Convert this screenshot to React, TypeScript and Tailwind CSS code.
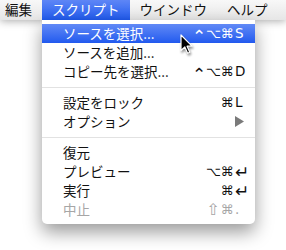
import React from "react";

type Item =
  | { sep: true }
  | {
      sep?: false;
      label: string;
      mods?: string[];
      keyChar?: string;
      submenu?: boolean;
      active?: boolean;
      disabled?: boolean;
    };

const items: Item[] = [
  { label: "ソースを選択...", mods: ["⌃", "⌥", "⌘"], keyChar: "S", active: true },
  { label: "ソースを追加..." },
  { label: "コピー先を選択...", mods: ["⌃", "⌥", "⌘"], keyChar: "D" },
  { sep: true },
  { label: "設定をロック", mods: ["⌘"], keyChar: "L" },
  { label: "オプション", submenu: true },
  { sep: true },
  { label: "復元" },
  { label: "プレビュー", mods: ["⌥", "⌘"], keyChar: "↵" },
  { label: "実行", mods: ["⌘"], keyChar: "↵" },
  { label: "中止", mods: ["⇧", "⌘"], keyChar: ".", disabled: true },
];

const jp = "font-['Noto_Sans_CJK_JP','Noto_Sans',sans-serif]";
const sym = "font-['DejaVu_Sans','Noto_Sans_CJK_JP',sans-serif]";

// per-glyph tweaks so the DejaVu symbols read like the Mac ones
const glyphClass: Record<string, string> = {
  "⌃": "text-[17px] translate-y-[3px]",
  "⌥": "text-[13px]",
  "⌘": "text-[13px]",
  "⇧": "text-[16px]",
  "↵": "text-[17px] translate-y-[1px]",
};

function MenuRow({ item }: { item: Exclude<Item, { sep: true }> }) {
  const color = item.active
    ? "text-white bg-gradient-to-b from-[#6189f6] to-[#2159ee]"
    : item.disabled
      ? "text-[#a6a6a6]"
      : "text-[#111]";
  return (
    <div className={`h-[19px] flex items-center pl-[21px] pr-[6px] ${color}`}>
      <span className={`${jp} text-[13.5px] leading-none flex-1`}>{item.label}</span>
      {item.submenu ? (
        <svg width="10" height="11" viewBox="0 0 10 11" className="mr-[4px]">
          <polygon points="0,0 9,5.5 0,11" fill="#7a7a7a" />
        </svg>
      ) : item.keyChar ? (
        <div className={`flex items-center ${sym} text-[13.5px] leading-none`}>
          {item.mods?.map((m, i) => (
            <span key={i} className={`w-[14px] text-center inline-block ${glyphClass[m] ?? ""}`}>
              {m}
            </span>
          ))}
          <span className={`w-[15px] text-left pl-[1px] inline-block ${glyphClass[item.keyChar] ?? ""}`}>
            {item.keyChar}
          </span>
        </div>
      ) : null}
    </div>
  );
}

export default function App() {
  return (
    <div className="relative w-[286px] h-[250px] bg-white overflow-hidden">
      <div
        className={`relative z-10 h-[20px] flex items-stretch bg-gradient-to-b from-[#f8f8f8] to-[#e6e6e6] shadow-[0_1px_9px_rgba(0,0,0,0.35)] ${jp} text-[13.5px] leading-none text-[#111]`}
      >
        <div className="flex items-center px-[10px] ml-[-5px]">編集</div>
        <div className="flex items-center px-[10px] text-white bg-gradient-to-b from-[#5e86f6] to-[#1f5aee]">
          スクリプト
        </div>
        <div className="flex items-center px-[10px]">ウインドウ</div>
        <div className="flex items-center px-[10px]">ヘルプ</div>
      </div>

      <div className="absolute z-20 left-[42px] top-[20px] w-[213px] bg-white rounded-b-[5px] pt-[4px] pb-[5px] shadow-[0_8px_18px_rgba(0,0,0,0.4)]">
        {items.map((item, i) =>
          item.sep ? (
            <div key={i} className="h-[12px] flex items-center">
              <div className="h-px w-full bg-[#e2e2e2]" />
            </div>
          ) : (
            <MenuRow key={i} item={item} />
          )
        )}
      </div>

      <svg
        className="absolute z-30 left-[180px] top-[34px] drop-shadow-[1px_2px_1px_rgba(0,0,0,0.4)]"
        width="14"
        height="21"
        viewBox="0 0 14 21"
      >
        <polygon
          points="1,1 1,16.5 4.8,13 7.6,19.2 9.8,18.2 7.1,12.2 12,12.2"
          fill="#000"
          stroke="#fff"
          strokeWidth="1.2"
          strokeLinejoin="round"
        />
      </svg>
    </div>
  );
}
